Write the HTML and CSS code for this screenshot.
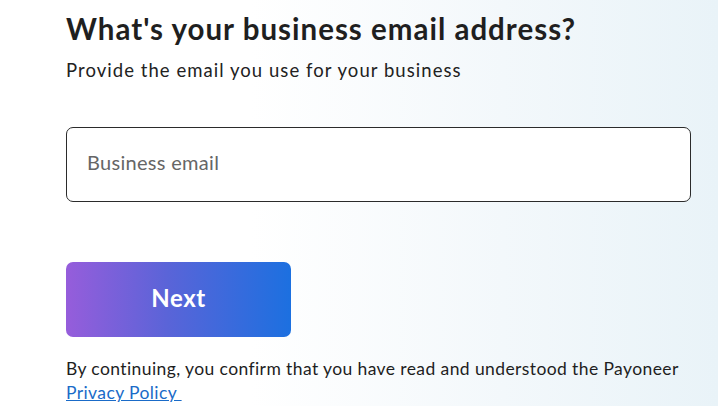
FILE: index.html
```html
<!DOCTYPE html>
<html lang="en">
  <head>
    <meta charset="UTF-8" />
    <meta name="viewport" content="width=device-width, initial-scale=1.0" />
    <title>Business email</title>
    <link rel="stylesheet" href="styles.css">
  </head>
  <body>
    <div class="wrapper">
      <h1 class="title">What's your business email address?</h1>
      <p class="subtitle">Provide the email you use for your business</p>
      <div class="field">
        <input type="email" class="input-field" placeholder="Business email" />
      </div>
      <button class="next-btn">Next</button>
      <p class="legal">
        By continuing, you confirm that you have read and understood the Payoneer
        <a href="#" class="policy">Privacy Policy&nbsp;</a>
      </p>
    </div>
  </body>
</html>
```

FILE: styles.css
```css
* {
  margin: 0;
  padding: 0;
  box-sizing: border-box;
  font-family: Lato, "Open Sans", sans-serif;
}
body {
  width: 718px;
  height: 406px;
  overflow: hidden;
  background: linear-gradient(90deg, #ffffff 0%, #ffffff 35%, #f3f8fb 70%, #e9f3f8 100%);
  color: #222;
}
.wrapper {
  padding: 12px 28px 0 66px;
}
.title {
  font-size: 29.5px;
  font-weight: 700;
  line-height: 34px;
  color: #1f1f1f;
  letter-spacing: 1px;
}
.subtitle {
  margin-top: 12px;
  font-size: 18.5px;
  line-height: 24px;
  color: #222;
  letter-spacing: 1.05px;
}
.field {
  margin-top: 45px;
}
.input-field {
  width: 625px;
  height: 75px;
  padding: 0 20px 5px;
  border: 1px solid #2b2b2b;
  border-radius: 7px;
  background: #fff;
  font-size: 20px;
  letter-spacing: 0.3px;
  color: #222;
  outline: none;
}
.input-field::placeholder {
  color: #666;
}
.next-btn {
  display: block;
  margin-top: 60px;
  width: 225px;
  height: 75px;
  padding-bottom: 5px;
  border: none;
  border-radius: 7px;
  background: linear-gradient(90deg, #965ddb 0%, #5a64d8 45%, #1c70e0 100%);
  color: #fff;
  font-size: 24px;
  font-weight: 700;
  letter-spacing: 0.6px;
  cursor: pointer;
}
.legal {
  margin-top: 20px;
  font-size: 17.5px;
  line-height: 24px;
  color: #1e1e1e;
  letter-spacing: 0.4px;
}
.policy {
  color: #1a6bc8;
  text-decoration: underline;
}
```
